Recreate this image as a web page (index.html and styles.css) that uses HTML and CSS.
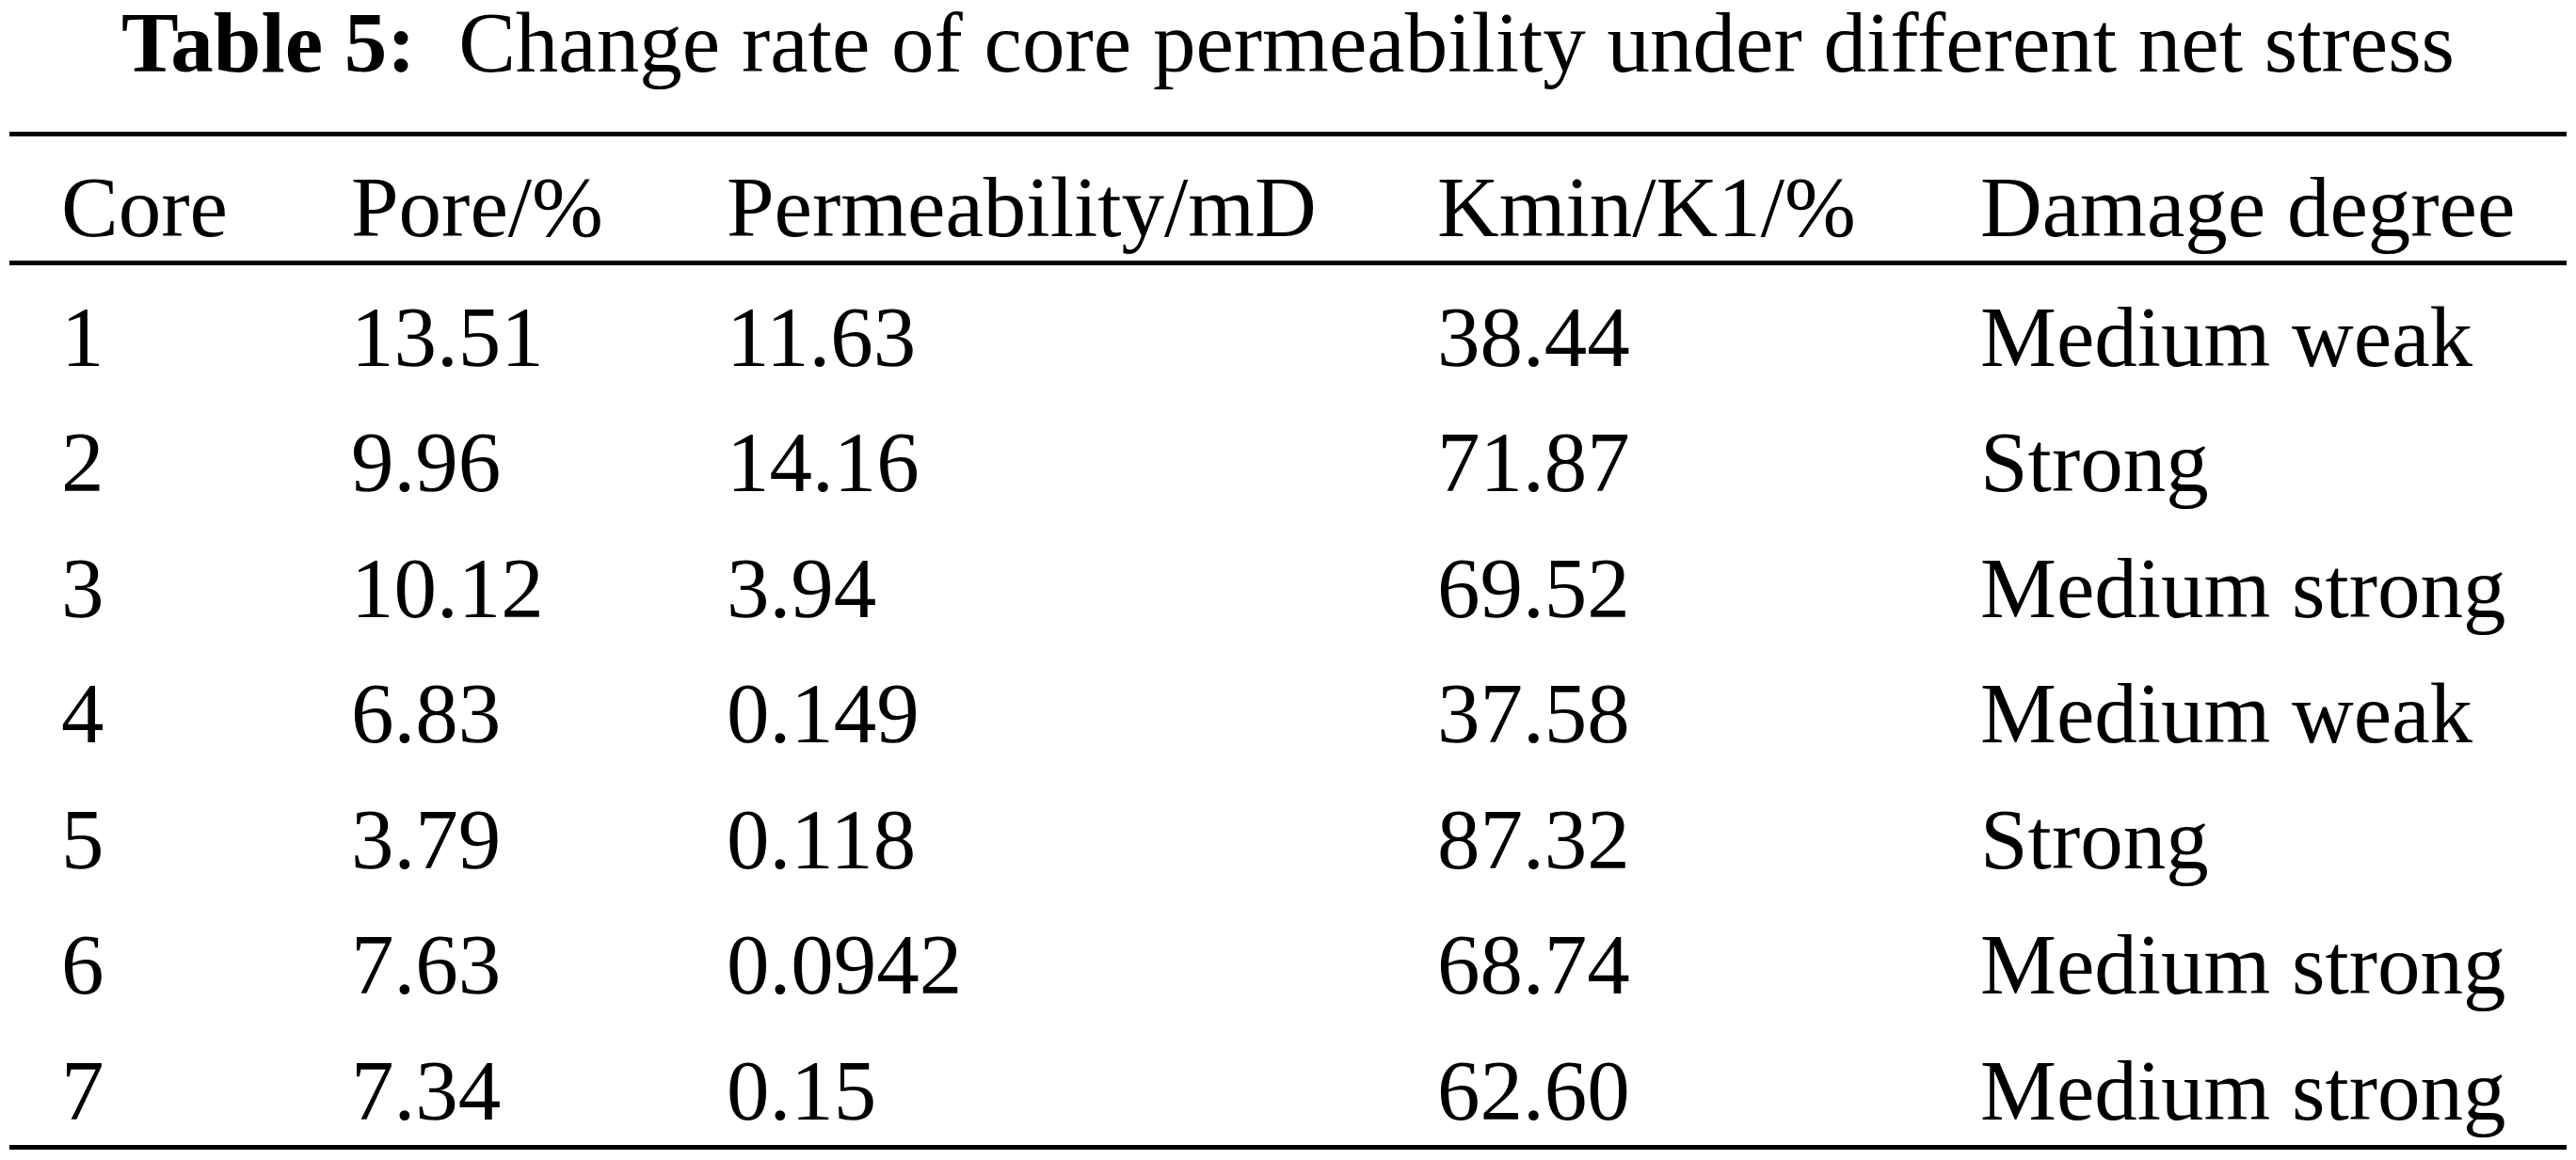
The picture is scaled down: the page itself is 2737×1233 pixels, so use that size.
FILE: index.html
```html
<!DOCTYPE html>
<html lang="en">
<head>
<meta charset="utf-8">
<title>Table 5</title>
<link rel="stylesheet" href="styles.css">
</head>
<body>
<div class="page">
  <div class="caption"><span class="label">Table 5:</span> Change rate of core permeability under different net stress</div>
  <div class="table">
    <div class="row head">
      <div>Core</div><div>Pore/%</div><div>Permeability/mD</div><div>Kmin/K1/%</div><div>Damage degree</div>
    </div>
    <div class="body">
      <div class="row"><div>1</div><div>13.51</div><div>11.63</div><div>38.44</div><div>Medium weak</div></div>
      <div class="row"><div>2</div><div>9.96</div><div>14.16</div><div>71.87</div><div>Strong</div></div>
      <div class="row"><div>3</div><div>10.12</div><div>3.94</div><div>69.52</div><div>Medium strong</div></div>
      <div class="row"><div>4</div><div>6.83</div><div>0.149</div><div>37.58</div><div>Medium weak</div></div>
      <div class="row"><div>5</div><div>3.79</div><div>0.118</div><div>87.32</div><div>Strong</div></div>
      <div class="row"><div>6</div><div>7.63</div><div>0.0942</div><div>68.74</div><div>Medium strong</div></div>
      <div class="row"><div>7</div><div>7.34</div><div>0.15</div><div>62.60</div><div>Medium strong</div></div>
    </div>
  </div>
</div>
</body>
</html>
```
FILE: styles.css
```css
html, body {
  margin: 0;
  padding: 0;
  background: #ffffff;
}

.page {
  width: 2737px;
  font-family: "Liberation Serif", "Times New Roman", serif;
  font-size: 91px;
  color: #000000;
}

.caption {
  text-align: center;
  line-height: 92px;
  height: 92px;
  white-space: nowrap;
  margin-bottom: 48px;
}

.caption .label {
  font-weight: bold;
  margin-right: 0.25em;
}

.table {
  margin-left: 10px;
  width: 2717px;
  border-top: 5px solid #000;
  border-bottom: 5px solid #000;
}

.row {
  display: grid;
  grid-template-columns: 308px 399px 755px 577px 1fr;
  padding-left: 55px;
  white-space: nowrap;
}

.row.head {
  padding-top: 20px;
  line-height: 112px;
  border-bottom: 5px solid #000;
}

.body .row {
  padding-top: 18.5px;
  line-height: 115.1px;
}
```
